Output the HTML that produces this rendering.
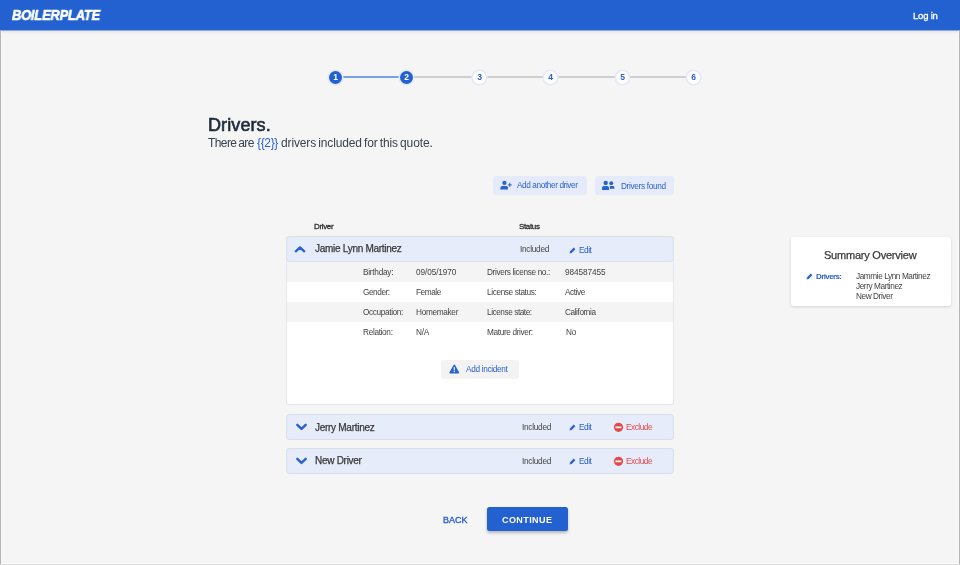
<!DOCTYPE html><html><head><meta charset="utf-8">
<style>
*{margin:0;padding:0;box-sizing:border-box}
html,body{width:960px;height:565px;overflow:hidden;background:#f5f5f5;font-family:"Liberation Sans",sans-serif;color:#333}
.a{position:absolute;white-space:nowrap;line-height:1;will-change:transform}
svg{position:absolute;overflow:visible}
#hdr{position:absolute;left:0;top:0;width:960px;height:30px;background:#2261cf;box-shadow:0 1px 0 rgba(34,97,207,.45),0 2px 3px rgba(0,0,0,.09)}
#logo{left:11px;top:8px;color:#fff;font-weight:bold;font-style:italic;font-size:14px;letter-spacing:-0.2px;-webkit-text-stroke:0.6px #fff;transform:scaleX(0.92);transform-origin:0 0}
#login{left:913px;top:10.7px;color:#fff;font-weight:normal;font-size:9.5px;letter-spacing:-0.2px;-webkit-text-stroke:0.3px #fff}
.frameL{position:absolute;left:0;top:31px;width:1px;height:535px;background:#b3b3b3}
.frameL2{position:absolute;left:1px;top:31px;width:1px;height:533px;background:#f9f9f9}
.frameR{position:absolute;left:959px;top:31px;width:1px;height:535px;background:#b3b3b3}
.frameR2{position:absolute;left:958px;top:31px;width:1px;height:533px;background:#f9f9f9}
.frameB{position:absolute;left:0;top:564px;width:960px;height:1px;background:#dcdcdc}
.frameB2{position:absolute;left:2px;top:563px;width:956px;height:1px;background:#f9f9f9}
.line{position:absolute;top:76px;height:2px;background:#cfcfcf}
.step{position:absolute;will-change:transform;top:70.5px;width:13px;height:13px;border-radius:50%;background:#fff;box-shadow:0 0 0 1.6px #e3e9f5;color:#2a62d0;font-size:8.5px;font-weight:bold;text-align:center;line-height:13px}
.step.on{background:#2261cf;color:#fff;box-shadow:0 0 0 1.6px #e4eaf6}
#title{left:207px;top:116px;font-size:18px;font-weight:normal;color:#1f2c3b;letter-spacing:0.1px;-webkit-text-stroke:0.65px #1f2c3b}
.sub{top:137px;font-size:12px;color:#39434f;word-spacing:-1px}
.blue{color:#2a62d0}
.btn{position:absolute;height:19px;background:#e5ebfa;border-radius:3px}
.btxt{font-size:8.25px;color:#2a62d0;letter-spacing:-0.25px}
.th{font-size:8px;font-weight:normal;color:#2e2e2e;letter-spacing:-0.35px;-webkit-text-stroke:0.3px #2e2e2e}
.row{position:absolute;left:286px;width:388px;background:#e6ecf9;border:1px solid #d9e0ea;border-radius:3px}
.detail{position:absolute;left:286px;top:262px;width:388px;height:143px;background:#fff;border:1px solid #e6e7ea;border-top:none;border-radius:0 0 3px 3px}
.stripe{position:absolute;left:287px;width:386px;height:20px;background:#f4f4f4}
.lbl{font-size:8.25px;color:#444;letter-spacing:-0.28px}
.dg{letter-spacing:0.15px}
.name{font-size:10px;color:#383838;letter-spacing:-0.3px;-webkit-text-stroke:0.25px #383838}
.inc{font-size:8.25px;color:#444;letter-spacing:-0.15px}
.edit{font-size:8.25px;color:#2a62d0;letter-spacing:-0.2px}
.excl{font-size:8.25px;color:#e04c4c;letter-spacing:-0.3px}
#cont{position:absolute;left:487px;top:507px;width:81px;height:24px;background:#2261cf;border-radius:2.5px;box-shadow:0 2px 3px rgba(0,0,0,.25)}
#card{}
.cn{font-size:8.25px;color:#444;letter-spacing:-0.25px}
#card{position:absolute;left:791px;top:237px;width:160px;height:69px;background:#fff;border-radius:3px;box-shadow:0 1px 3px rgba(0,0,0,.15)}
</style></head><body>
<div id="hdr"></div>
<div class="a" id="logo" style="left:11.5px">BOILERPLATE</div>
<div class="a" id="login" style="left:912.6px">Log in</div>
<div class="frameL"></div><div class="frameL2"></div>
<div class="frameR"></div><div class="frameR2"></div>
<div class="frameB"></div><div class="frameB2"></div>

<div class="line" style="left:342px;width:57px;background:#79a0e2"></div>
<div class="line" style="left:413px;width:59px"></div>
<div class="line" style="left:486px;width:57px"></div>
<div class="line" style="left:557px;width:58px"></div>
<div class="line" style="left:630px;width:56px"></div>
<div class="step on" style="left:328.8px">1</div>
<div class="step on" style="left:399.8px">2</div>
<div class="step" style="left:472.7px">3</div>
<div class="step" style="left:543.6px">4</div>
<div class="step" style="left:616.2px">5</div>
<div class="step" style="left:687.2px">6</div>

<div class="a" id="title" style="left:207.5px">Drivers.</div>
<div class="a sub" style="left:207.5px;letter-spacing:-0.575px">There are</div>
<div class="a sub blue" style="left:256.5px;letter-spacing:-0.35px">{{2}}</div>
<div class="a sub" style="left:280.8px;letter-spacing:-0.14px">drivers included for this quote.</div>

<div class="btn" style="left:493px;top:176px;width:94px"></div>
<svg style="left:500px;top:180px" width="12" height="10" viewBox="0 0 12 10"><circle cx="4.4" cy="2.95" r="2.15" fill="#2a62d0"></circle><path d="M0.4 9.5V8.2C0.4 6.8 1.3 6 2.6 6H6.2C7.5 6 8 6.8 8 8.2V9.5Z" fill="#2a62d0"></path><path d="M9.8 2.9V6.9M7.8 4.9H11.8" stroke="#2a62d0" stroke-width="1.0"></path></svg>
<div class="a btxt" style="left: 517.1px; top: 182px; letter-spacing: -0.403px;">Add another driver</div>
<div class="btn" style="left:595px;top:176px;width:79px"></div>
<svg style="left:602px;top:180px" width="13" height="10" viewBox="0 0 13 10"><circle cx="3.7" cy="2.9" r="2.2" fill="#2a62d0"></circle><path d="M0 9.9V8C0 6.8 0.8 6 2 6H5C6.2 6 7 6.8 7 8V9.9Z" fill="#2a62d0"></path><circle cx="9.25" cy="3.3" r="1.95" fill="#2a62d0"></circle><path d="M7.9 8.8V6H11C12 6 12.4 6.8 12.4 7.8V8.8Z" fill="#2a62d0"></path></svg>
<div class="a btxt" style="left: 620.7px; top: 183px; letter-spacing: -0.333px;">Drivers found</div>

<div class="a th" style="left:314.4px;top:223.3px">Driver</div>
<div class="a th" style="left:518.6px;top:223.3px">Status</div>

<div class="row" style="top:236px;height:26px"></div>
<div class="detail"></div>
<div class="stripe" style="top:262px"></div>
<div class="stripe" style="top:302px"></div>
<svg style="left:294px;top:245px" width="12" height="8" viewBox="0 0 12 8"><path d="M1.8 6.3L6 2.4L10.2 6.3" fill="none" stroke="#2a62d0" stroke-width="2.4" stroke-linecap="round" stroke-linejoin="round"></path></svg>
<div class="a name" style="left:315px;top:244px;letter-spacing:-0.28px">Jamie Lynn Martinez</div>
<div class="a inc" style="left:519.8px;top:246px;letter-spacing:-0.27px">Included</div>
<svg style="left:569px;top:247px" width="7" height="7" viewBox="0 0 7 7"><path d="M1.6 5.4L5.6 1.4" stroke="#2a62d0" stroke-width="2.2"></path><path d="M0.6 6.5L0.9 4.6L2.4 6.1Z" fill="#2a62d0"></path></svg>
<div class="a edit" style="left:578.8px;top:247px;letter-spacing:-0.45px">Edit</div>

<div class="a lbl" style="left:362.5px;top:269px;letter-spacing:-0.255px">Birthday:</div>
<div class="a lbl dg" style="left:415.8px;top:269px;letter-spacing:-0.1px">09/05/1970</div>
<div class="a lbl" style="left:487.3px;top:269px;letter-spacing:-0.36px">Drivers license no.:</div>
<div class="a lbl dg" style="left:564.5px;top:269px;letter-spacing:-0.1px">984587455</div>
<div class="a lbl" style="left:362.5px;top:289px;letter-spacing:-0.45px">Gender:</div>
<div class="a lbl" style="left:415.8px;top:289px;letter-spacing:-0.45px">Female</div>
<div class="a lbl" style="left:487.3px;top:289px;letter-spacing:-0.377px">License status:</div>
<div class="a lbl" style="left:564.5px;top:289px;letter-spacing:-0.44px">Active</div>
<div class="a lbl" style="left:362.5px;top:309px;letter-spacing:-0.37px">Occupation:</div>
<div class="a lbl" style="left:415.8px;top:309px;letter-spacing:-0.319px">Homemaker</div>
<div class="a lbl" style="left:487.3px;top:309px;letter-spacing:-0.442px">License state:</div>
<div class="a lbl" style="left:564.5px;top:309px;letter-spacing:-0.424px">California</div>
<div class="a lbl" style="left:362.5px;top:329px;letter-spacing:-0.33px">Relation:</div>
<div class="a lbl" style="left:415.8px;top:329px;letter-spacing:-0.3px">N/A</div>
<div class="a lbl" style="left:487.3px;top:329px;letter-spacing:-0.365px">Mature driver:</div>
<div class="a lbl" style="left:566px;top:329px;letter-spacing:-0.3px">No</div>

<div class="btn" style="left:441px;top:360px;width:78px;background:#f3f3f3"></div>
<svg style="left:449px;top:364px" width="11" height="10" viewBox="0 0 11 10"><path d="M5.3 0.6C5.6 0.6 5.8 0.8 6 1.1L10.1 8.3C10.4 8.9 10.1 9.5 9.4 9.5H1.2C0.5 9.5 0.2 8.9 0.5 8.3L4.6 1.1C4.8 0.8 5 0.6 5.3 0.6Z" fill="#2a62d0"></path><path d="M5.3 3.6V6" stroke="#fff" stroke-width="1.1" stroke-linecap="round"></path><circle cx="5.3" cy="7.5" r="0.65" fill="#fff"></circle></svg>
<div class="a btxt" style="left: 465.9px; top: 366px; letter-spacing: -0.327px;">Add incident</div>

<div class="row" style="top:414px;height:26px"></div>
<svg style="left:295px;top:422px" width="13" height="10" viewBox="0 0 13 10"><path d="M2.3 2.8L6.5 6.9L10.7 2.8" fill="none" stroke="#2a62d0" stroke-width="2.4" stroke-linecap="round" stroke-linejoin="round"></path></svg>
<div class="a name" style="left:315px;top:423px;letter-spacing:-0.28px">Jerry Martinez</div>
<div class="a inc" style="left:522.25px;top:424px;letter-spacing:-0.27px">Included</div>
<svg style="left:569px;top:424px" width="7" height="7" viewBox="0 0 7 7"><path d="M1.6 5.4L5.6 1.4" stroke="#2a62d0" stroke-width="2.2"></path><path d="M0.6 6.5L0.9 4.6L2.4 6.1Z" fill="#2a62d0"></path></svg>
<div class="a edit" style="left:578.8px;top:424px;letter-spacing:-0.45px">Edit</div>
<svg style="left:613px;top:422px" width="11" height="11" viewBox="0 0 11 11"><circle cx="5.5" cy="5.3" r="4.6" fill="#e24a4a"></circle><rect x="2.4" y="4.5" width="6" height="1.7" fill="#fff"></rect></svg>
<div class="a excl" style="left: 626px; top: 424px; letter-spacing: -0.467px;">Exclude</div>

<div class="row" style="top:448px;height:26px"></div>
<svg style="left:295px;top:456px" width="13" height="10" viewBox="0 0 13 10"><path d="M2.3 2.8L6.5 6.9L10.7 2.8" fill="none" stroke="#2a62d0" stroke-width="2.4" stroke-linecap="round" stroke-linejoin="round"></path></svg>
<div class="a name" style="left:315px;top:456px;letter-spacing:-0.28px">New Driver</div>
<div class="a inc" style="left:522.25px;top:458px;letter-spacing:-0.27px">Included</div>
<svg style="left:569px;top:458px" width="7" height="7" viewBox="0 0 7 7"><path d="M1.6 5.4L5.6 1.4" stroke="#2a62d0" stroke-width="2.2"></path><path d="M0.6 6.5L0.9 4.6L2.4 6.1Z" fill="#2a62d0"></path></svg>
<div class="a edit" style="left:578.8px;top:458px;letter-spacing:-0.45px">Edit</div>
<svg style="left:613px;top:456px" width="11" height="11" viewBox="0 0 11 11"><circle cx="5.5" cy="5.3" r="4.6" fill="#e24a4a"></circle><rect x="2.4" y="4.5" width="6" height="1.7" fill="#fff"></rect></svg>
<div class="a excl" style="left: 626px; top: 458px; letter-spacing: -0.467px;">Exclude</div>

<div class="a" style="left:443px;top:516px;font-size:9px;color:#2a62d0;letter-spacing:0px;-webkit-text-stroke:0.35px #2a62d0">BACK</div>
<div id="cont"></div>
<div class="a" style="left: 502.4px; top: 516px; font-size: 9px; font-weight: bold; color: rgb(255, 255, 255); letter-spacing: 0.415px;">CONTINUE</div>

<div id="card"></div>
<div class="a" style="left:824.3px;top:250px;font-size:11px;color:#3a3a3a;letter-spacing:-0.22px;-webkit-text-stroke:0.25px #3a3a3a">Summary Overview</div>
<svg style="left:806px;top:273px" width="7" height="7" viewBox="0 0 7 7"><path d="M1.6 5.4L5.6 1.4" stroke="#2a62d0" stroke-width="2.2"></path><path d="M0.6 6.5L0.9 4.6L2.4 6.1Z" fill="#2a62d0"></path></svg>
<div class="a" style="left: 816.2px; top: 273px; font-size: 8px; font-weight: bold; color: rgb(42, 98, 208); letter-spacing: -0.6px;">Drivers:</div>
<div class="a cn" style="left:856px;top:273px;letter-spacing:-0.43px">Jammie Lynn Martinez</div>
<div class="a cn" style="left:856px;top:283px;letter-spacing:-0.43px">Jerry Martinez</div>
<div class="a cn" style="left:856px;top:293px;letter-spacing:-0.43px">New Driver</div>

</body></html>
